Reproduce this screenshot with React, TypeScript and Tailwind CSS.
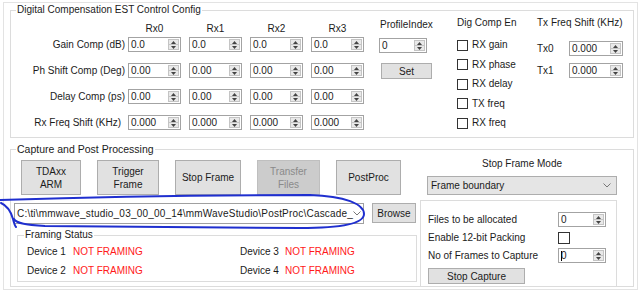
import React from 'react';

function SpinArrows() {
  return (
    <span className="my-[1px] mr-[1px] flex w-[11px] flex-col border border-[#c4c4c4] bg-[#e9e9e9]">
      <span className="flex flex-1 items-center justify-center border-b border-[#c4c4c4]">
        <svg width="5" height="3" viewBox="0 0 5 3">
          <path d="M0 3 L2.5 0 L5 3 Z" fill="#444" />
        </svg>
      </span>
      <span className="flex flex-1 items-center justify-center">
        <svg width="5" height="3" viewBox="0 0 5 3">
          <path d="M0 0 L2.5 3 L5 0 Z" fill="#444" />
        </svg>
      </span>
    </span>
  );
}

function Spin({ value, className }: { value: string; className: string }) {
  return (
    <div className={`flex h-[15px] items-stretch border border-[#a3a3a3] bg-white ${className}`}>
      <span className="flex-1 pl-[2px] leading-[13px]">{value}</span>
      <SpinArrows />
    </div>
  );
}

function Check() {
  return <span className="block h-[11px] w-[11px] border border-[#333] bg-white" />;
}

function Chevron() {
  return (
    <svg width="8" height="5" viewBox="0 0 8 5" className="mr-[5px] shrink-0">
      <path d="M0.5 0.5 L4 4 L7.5 0.5" fill="none" stroke="#777" strokeWidth="1" />
    </svg>
  );
}

function Btn({ children, className, disabled }: { children: React.ReactNode; className: string; disabled?: boolean }) {
  return (
    <div
      className={`flex items-center justify-center text-center leading-[13px] ${
        disabled ? 'border border-[#bfbfbf] bg-[#cccccc] text-[#8a8a8a]' : 'border border-[#adadad] bg-[#e1e1e1]'
      } ${className}`}
    >
      {children}
    </div>
  );
}

const rxCols = [
  { name: 'Rx0', vals: ['0.0', '0.00', '0.00', '0.000'] },
  { name: 'Rx1', vals: ['0.0', '0.00', '0.00', '0.000'] },
  { name: 'Rx2', vals: ['0.0', '0.00', '0.00', '0.000'] },
  { name: 'Rx3', vals: ['0.0', '0.00', '0.00', '0.000'] },
];

const digComp = ['RX gain', 'RX phase', 'RX delay', 'TX freq', 'RX freq'];

export default function App() {
  return (
    <div className="relative h-[292px] w-[640px] overflow-hidden bg-white font-['Liberation_Sans',Arial,sans-serif] text-[10px] text-[#1b1b1b]">
      <div className="ml-[3px] mt-[2px] h-[288px] w-[635px] border border-[#e3e3e3]">
        {/* Digital Compensation group */}
        <div className="relative ml-[6px] mt-[7px] flex h-[128px] w-[624px] items-start border border-[#dcdcdc]">
          <span className="absolute -top-[7px] left-[5px] bg-white px-[1px] leading-[12px]">
            Digital Compensation EST Control Config
          </span>

          <div className="flex w-[114px] flex-col gap-[11px] pt-[26px] text-right">
            <div className="h-[15px] leading-[15px]">Gain Comp (dB)</div>
            <div className="h-[15px] leading-[15px]">Ph Shift Comp (Deg)</div>
            <div className="h-[15px] leading-[15px]">Delay Comp (ps)</div>
            <div className="h-[15px] pr-[4px] leading-[15px]">Rx Freq Shift (KHz)</div>
          </div>

          <div className="ml-[3px] flex gap-[8px] pt-[11px]">
            {rxCols.map((c) => (
              <div key={c.name} className="flex w-[53px] flex-col">
                <div className="h-[14px] text-center leading-[14px]">{c.name}</div>
                <div className="mt-[1px] flex flex-col gap-[11px]">
                  {c.vals.map((v, i) => (
                    <Spin key={i} value={v} className="w-[53px]" />
                  ))}
                </div>
              </div>
            ))}
          </div>

          <div className="ml-[15px] flex w-[53px] flex-col pt-[8px]">
            <div className="h-[12px] whitespace-nowrap pl-[1px] leading-[12px]">ProfileIndex</div>
            <Spin value="0" className="mt-[7px] w-[48px]" />
            <Btn className="ml-[2px] mt-[10px] h-[16px] w-[51px]">Set</Btn>
          </div>

          <div className="ml-[25px] flex w-[80px] flex-col pt-[6px]">
            <div className="h-[12px] leading-[12px]">Dig Comp En</div>
            <div className="mt-[10px] flex flex-col gap-[7.5px]">
              {digComp.map((d) => (
                <div key={d} className="flex h-[12px] items-center gap-[4px]">
                  <Check />
                  <span className="leading-[12px]">{d}</span>
                </div>
              ))}
            </div>
          </div>

          <div className="flex flex-col pt-[6px]">
            <div className="h-[12px] whitespace-nowrap leading-[12px]">Tx Freq Shift (KHz)</div>
            <div className="mt-[12px] flex flex-col gap-[7px]">
              <div className="flex items-center">
                <span className="w-[32px]">Tx0</span>
                <Spin value="0.000" className="w-[54px]" />
              </div>
              <div className="flex items-center">
                <span className="w-[32px]">Tx1</span>
                <Spin value="0.000" className="w-[54px]" />
              </div>
            </div>
          </div>
        </div>

        {/* Capture and Post Processing group */}
        <div className="relative ml-[6px] mt-[11px] flex h-[138px] w-[624px] items-start border border-[#dcdcdc]">
          <span className="absolute -top-[7px] left-[5px] bg-white px-[1px] text-[10.5px] leading-[12px]">
            Capture and Post Processing
          </span>

          <div className="flex w-[409px] flex-col">
            <div className="flex gap-[16px] pl-[10px] pt-[10px]">
              <Btn className="h-[35px] w-[60px]">
                TDAxx
                <br />
                ARM
              </Btn>
              <Btn className="h-[35px] w-[62px]">
                Trigger
                <br />
                Frame
              </Btn>
              <Btn className="h-[35px] w-[66px]">Stop Frame</Btn>
              <Btn disabled className="h-[35px] w-[63px]">
                Transfer
                <br />
                Files
              </Btn>
              <Btn className="h-[35px] w-[65px]">PostProc</Btn>
            </div>

            <div className="ml-[3px] mt-[8px] flex items-start">
              <div className="flex h-[21px] w-[350px] items-center border border-[#a0a0a0] bg-white">
                <span className="flex-1 whitespace-nowrap pl-[2px] tracking-[0.2px]">
                  C:\ti\mmwave_studio_03_00_00_14\mmWaveStudio\PostProc\Cascade_
                </span>
                <Chevron />
              </div>
              <Btn className="ml-[8px] h-[20px] w-[44px]">Browse</Btn>
            </div>

            <div className="relative ml-[6px] mt-[11px] h-[47px] w-[400px] border border-[#dcdcdc]">
              <span className="absolute -top-[7px] left-[6px] bg-white px-[1px] leading-[12px]">Framing Status</span>
              <div className="flex pl-[9px] pt-[10px]">
                <div className="flex w-[213px] flex-col gap-[7px]">
                  <div className="flex h-[12px] leading-[12px]">
                    <span className="w-[46px]">Device 1</span>
                    <span className="text-[#ff1a1a]">NOT FRAMING</span>
                  </div>
                  <div className="flex h-[12px] leading-[12px]">
                    <span className="w-[46px]">Device 2</span>
                    <span className="text-[#ff1a1a]">NOT FRAMING</span>
                  </div>
                </div>
                <div className="flex flex-col gap-[7px]">
                  <div className="flex h-[12px] leading-[12px]">
                    <span className="w-[45px]">Device 3</span>
                    <span className="text-[#ff1a1a]">NOT FRAMING</span>
                  </div>
                  <div className="flex h-[12px] leading-[12px]">
                    <span className="w-[45px]">Device 4</span>
                    <span className="text-[#ff1a1a]">NOT FRAMING</span>
                  </div>
                </div>
              </div>
            </div>
          </div>

          <div className="flex h-full w-[197px] flex-col">
            <div className="mt-[8px] h-[12px] pl-[7px] text-center leading-[12px]">Stop Frame Mode</div>
            <div className="ml-[7px] mt-[6px] flex h-[19px] w-[190px] items-center border border-[#adadad] bg-[#e5e5e5]">
              <span className="flex-1 pl-[3px]">Frame boundary</span>
              <Chevron />
            </div>
            <div className="mt-[5px] flex flex-1 flex-col border-l border-r border-t border-[#dcdcdc] pl-[7px] pt-[11px]">
              <div className="flex flex-col gap-[3px]">
                <div className="flex h-[15px] items-center">
                  <span className="w-[130px]">Files to be allocated</span>
                  <Spin value="0" className="w-[48px]" />
                </div>
                <div className="flex h-[15px] items-center">
                  <span className="w-[130px]">Enable 12-bit Packing</span>
                  <span className="block h-[12px] w-[12px] border border-[#333] bg-white" />
                </div>
                <div className="flex h-[15px] items-center">
                  <span className="w-[130px]">No of Frames to Capture</span>
                  <div className="flex h-[15px] w-[48px] items-stretch border border-[#a3a3a3] bg-white">
                    <span className="flex flex-1 items-center pl-[2px] leading-[13px]">
                      <span className="mr-[-1px] inline-block h-[10px] w-[1px] bg-black" />0
                    </span>
                    <SpinArrows />
                  </div>
                </div>
              </div>
              <Btn className="mt-[5px] h-[16px] w-[97px]">Stop Capture</Btn>
            </div>
          </div>
        </div>
      </div>

      {/* hand-drawn annotation */}
      <svg className="pointer-events-none absolute left-0 top-0" width="640" height="292" viewBox="0 0 640 292">
        <path
          d="M0 200 C 90 197, 230 195, 310 195 C 345 196, 364 204, 364 214 C 364 223, 345 228, 300 228 L 45 226 C 24 225, 16 223, 14 219"
          fill="none"
          stroke="#1f2fcf"
          strokeWidth="2"
          strokeLinecap="round"
        />
        <path d="M1 203 C 8 206, 11 212, 13 219 C 14 223, 15 226, 16 227" fill="none" stroke="#1f2fcf" strokeWidth="2" strokeLinecap="round" />
      </svg>
    </div>
  );
}
